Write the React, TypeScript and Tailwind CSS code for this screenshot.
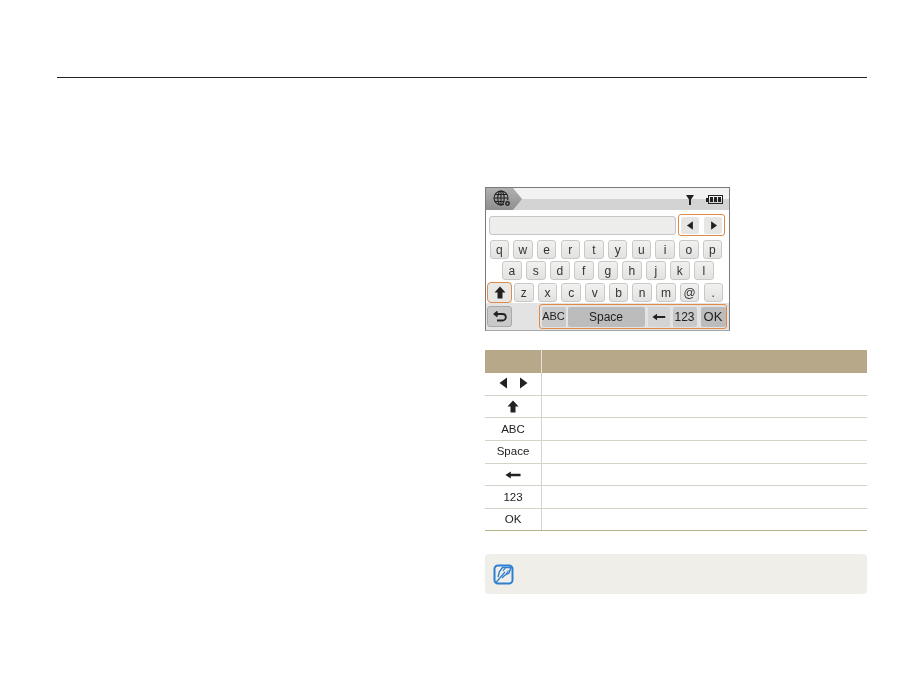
const rows = [
  ["q", "w", "e", "r", "t", "y", "u", "i", "o", "p"],
  ["a", "s", "d", "f", "g", "h", "j", "k", "l"],
];
const lastRow = ["z", "x", "c", "v", "b", "n", "m", "@", "."];

function Key({ label }: { label: string }) {
  return (
    <div className="w-[19.5px] h-[19px] flex items-center justify-center rounded-[3px] border border-[#c9c9c7] bg-gradient-to-b from-[#f1f1ef] to-[#e2e2e0] text-[12px] leading-none text-[#333]">
      {label}
    </div>
  );
}

function Left({ size = 14 }: { size?: number }) {
  return (
    <svg width={size} height={size} viewBox="0 0 14 14">
      <path d="M10 1.5V12.5L2.5 7Z" fill="#222" />
    </svg>
  );
}

function Right({ size = 14 }: { size?: number }) {
  return (
    <svg width={size} height={size} viewBox="0 0 14 14">
      <path d="M4 1.5V12.5L11.5 7Z" fill="#222" />
    </svg>
  );
}

function Up() {
  return (
    <svg width="12" height="13" viewBox="0 0 12 13">
      <path d="M6 .5L11.5 6.5H8.5V12.5H3.5V6.5H.5Z" fill="#222" />
    </svg>
  );
}

function BackArrow() {
  return (
    <svg width="16" height="8" viewBox="0 0 18 10" preserveAspectRatio="none">
      <path d="M.5 5L6.5 .5V3.5H17.5V6.5H6.5V9.5Z" fill="#222" />
    </svg>
  );
}

function Globe() {
  return (
    <svg width="19" height="18" viewBox="0 0 19 18" fill="none" stroke="#222" strokeWidth="1.1">
      <circle cx="8" cy="8" r="7" />
      <ellipse cx="8" cy="8" rx="3.2" ry="7" />
      <path d="M8 1V15M1 8H15M2 4.5H14M2 11.5H14" />
      <circle cx="14.5" cy="13.5" r="3" fill="#222" stroke="#999" />
      <circle cx="14.5" cy="13.5" r="1" fill="#999" stroke="none" />
    </svg>
  );
}

function Device() {
  return (
    <div className="w-[245px] h-[144px] border border-[#7a7a7a] border-b-[#a8a8a8] bg-white flex flex-col will-change-transform">
      {/* status bar */}
      <div className="h-[22px] flex shrink-0 bg-gradient-to-b from-[#f2f2f2] from-50% to-[#d3d3d3] to-50%">
        <div className="w-[36px] flex items-center pl-[7px] bg-gradient-to-b from-[#b0b0b0] to-[#8f8f8f] [clip-path:polygon(0_0,27px_0,36px_50%,27px_100%,0_100%)]">
          <Globe />
        </div>
        <div className="flex-1 flex items-start justify-end gap-[12px] pr-[6px] pt-[7px]">
          <svg width="8" height="10" viewBox="0 0 8 10">
            <path d="M0 0H8L5 4.5V10H3V4.5Z" fill="#222" />
          </svg>
          <div className="flex items-center">
            <div className="w-[2px] h-[4px] bg-[#222]" />
            <div className="w-[15px] h-[9px] border border-[#222] flex gap-px p-px">
              <div className="flex-1 bg-[#222]" />
              <div className="flex-1 bg-[#222]" />
              <div className="flex-1 bg-[#222]" />
            </div>
          </div>
        </div>
      </div>

      {/* input + cursor keys */}
      <div className="flex items-center pl-[3px] mt-[4px] h-[22px]">
        <div className="w-[187px] h-[19px] rounded-[3px] border border-[#c6c6c6] bg-[#ededec]" />
        <div className="ml-[2px] w-[47px] h-[22px] flex items-center justify-between px-[2px] rounded-[3px] border-[1.5px] border-[#e08a4a]">
          <div className="w-[18px] h-[17px] flex items-center justify-center bg-[#e6e6e4] rounded-[2px]">
            <Left size={11} />
          </div>
          <div className="w-[18px] h-[17px] flex items-center justify-center bg-[#e6e6e4] rounded-[2px]">
            <Right size={11} />
          </div>
        </div>
      </div>

      {/* letters */}
      <div className="flex flex-col mt-[4px]">
        <div className="flex gap-[4.2px] h-[21px] items-start pl-[3.5px]">
          {rows[0].map((k) => (
            <Key key={k} label={k} />
          ))}
        </div>
        <div className="flex gap-[4.5px] h-[21px] items-start pl-[16px]">
          {rows[1].map((k) => (
            <Key key={k} label={k} />
          ))}
        </div>
        <div className="flex items-start h-[21px] pl-[1px]">
          <div className="w-[25px] h-[21px] flex items-center justify-center rounded-[4px] border-[1.5px] border-[#e08a4a] bg-[#e8e8e6]">
            <Up />
          </div>
          <div className="flex gap-[4.2px] ml-[2px] mt-px">
            {lastRow.map((k) => (
              <Key key={k} label={k} />
            ))}
          </div>
        </div>
      </div>

      {/* bottom bar */}
      <div className="flex-1 flex items-center pl-[1px] bg-[#e3e3e3]">
        <div className="w-[25px] h-[21px] flex items-center justify-center rounded-[3px] border border-[#a9a9a9] bg-[#c9c9c9]">
          <svg width="14" height="11" viewBox="0 0 14 11" fill="none" stroke="#222" strokeWidth="1.8">
            <path d="M1.5 3H9.5C11.5 3 12.8 4.3 12.8 6C12.8 7.8 11.5 9.5 9.5 9.5H4" />
            <path d="M4.5 .5L1.5 3L4.5 5.5" />
          </svg>
        </div>
        <div className="ml-[27px] w-[188px] h-[25px] flex items-center pl-[1.5px] rounded-[3px] border-[1.5px] border-[#e08a4a] text-[#222]">
          <div className="w-[24px] h-[20px] flex items-center justify-center rounded-[2px] bg-[#c9c9c9] text-[11px]">ABC</div>
          <div className="ml-[2px] w-[77px] h-[20px] flex items-center justify-center rounded-[2px] bg-[#bcbcbc] text-[12px]">Space</div>
          <div className="ml-[3px] w-[22px] h-[20px] flex items-center justify-center rounded-[2px] bg-[#d4d4d4]">
            <svg width="14" height="8" viewBox="0 0 18 10">
              <path d="M.5 5L6.5 .8V3.8H17V6.2H6.5V9.2Z" fill="#222" />
            </svg>
          </div>
          <div className="ml-[3px] w-[24px] h-[20px] flex items-center justify-center rounded-[2px] bg-[#c9c9c9] text-[12px]">123</div>
          <div className="ml-[4px] w-[25px] h-[20px] flex items-center justify-center rounded-[2px] bg-[#bcbcbc] text-[13px]">OK</div>
        </div>
      </div>
    </div>
  );
}

const tableRows = [
  <div key="a" className="flex gap-[5px] -mt-px"><Left /><Right /></div>,
  <Up key="b" />,
  "ABC",
  "Space",
  <BackArrow key="c" />,
  "123",
  "OK",
];

export default function App() {
  return (
    <div className="w-[924px] h-[697px] bg-white font-['Liberation_Sans',Arial,sans-serif] pt-[77px] px-[57px] overflow-hidden">
      <div className="h-px bg-[#222]" />
      <div className="ml-[428px] w-[382px] mt-[109px]">
        <Device />

        <div className="mt-[19px] will-change-transform">
          <div className="h-[23px] flex bg-[#b7a88a]">
            <div className="w-[57px] border-r border-[#e8e2d6]" />
          </div>
          {tableRows.map((cell, i) => (
            <div
              key={i}
              className={
                i === tableRows.length - 1
                  ? "h-[22px] flex border-b border-[#b5b28a]"
                  : "h-[22.7px] flex border-b border-[#d6d2c8]"
              }
            >
              <div className="w-[57px] flex items-center justify-center border-r border-[#d6d2c8] text-[11.5px] text-[#222]">
                {cell}
              </div>
            </div>
          ))}
        </div>

        <div className="mt-[23px] h-[40px] rounded-[4px] bg-[#f0eee8] flex items-center pl-[8px]">
          <svg width="21" height="21" viewBox="0 0 21 21" fill="none" stroke="#2f7fd0">
            <rect x="1.5" y="1.5" width="18" height="18" rx="3.5" strokeWidth="2" />
            <path d="M5 13L6.5 7.5L9.5 3.5H18L16 9L11.5 11.5L9 14" fill="#f0eee8" strokeWidth="1.4" />
            <path d="M3 18.5L12 8M10 7L12.5 3.5M13 10.5L15.5 6.5" strokeWidth="1.2" />
          </svg>
        </div>
      </div>
    </div>
  );
}
